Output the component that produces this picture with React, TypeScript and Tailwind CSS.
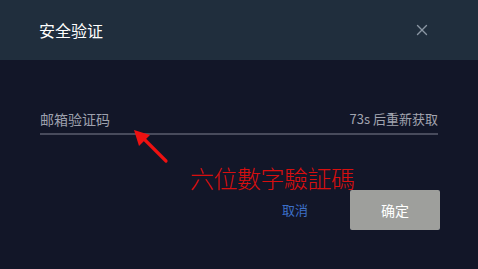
import { X } from "lucide-react";

export default function App() {
  return (
    <div
      className="relative w-[478px] h-[269px] bg-[#121628] overflow-hidden"
      style={{ fontFamily: '"Noto Sans CJK SC", "Noto Sans", sans-serif' }}
    >
      {/* Header */}
      <div className="h-[60px] bg-[#202e3d] flex items-center justify-between pl-[39px] pr-[47px]">
        <span className="text-[16px] leading-none text-white">安全验证</span>
        <X className="w-[18px] h-[18px] text-[#8a96a3]" strokeWidth={1.8} />
      </div>

      {/* Body */}
      <div className="px-[40px] pt-[49px]">
        <div className="h-[26px] pb-[4px] flex items-center justify-between border-b-2 border-[#484b5c]">
          <span className="text-[14px] text-[#9ea1ae]">邮箱验证码</span>
          <span className="text-[13px] text-[#a2a5b0]">73s 后重新获取</span>
        </div>
      </div>

      <div className="flex justify-end items-center pr-[38px] mt-[55px] gap-[42px]">
        <span className="text-[13px] text-[#3d70c8]">取消</span>
        <button className="w-[90px] h-[40px] rounded-[2px] bg-[#9e9f9c] text-white text-[14px]">
          确定
        </button>
      </div>

      {/* Annotation overlay */}
      <svg className="absolute left-[128px] top-[124px]" width="46" height="44" viewBox="0 0 46 44">
        <line x1="38" y1="37" x2="14" y2="13" stroke="#ee1111" strokeWidth="3.2" strokeLinecap="round" />
        <polygon points="6,6 22,11 11,22" fill="#ee1111" />
      </svg>
      <span
        className="absolute left-[190px] top-[163px] text-[24px] leading-[30px] text-[#d80f0f] font-light tracking-[-0.5px]"
        style={{ fontFamily: '"Noto Sans CJK TC", sans-serif' }}
      >
        六位數字驗証碼
      </span>
    </div>
  );
}
